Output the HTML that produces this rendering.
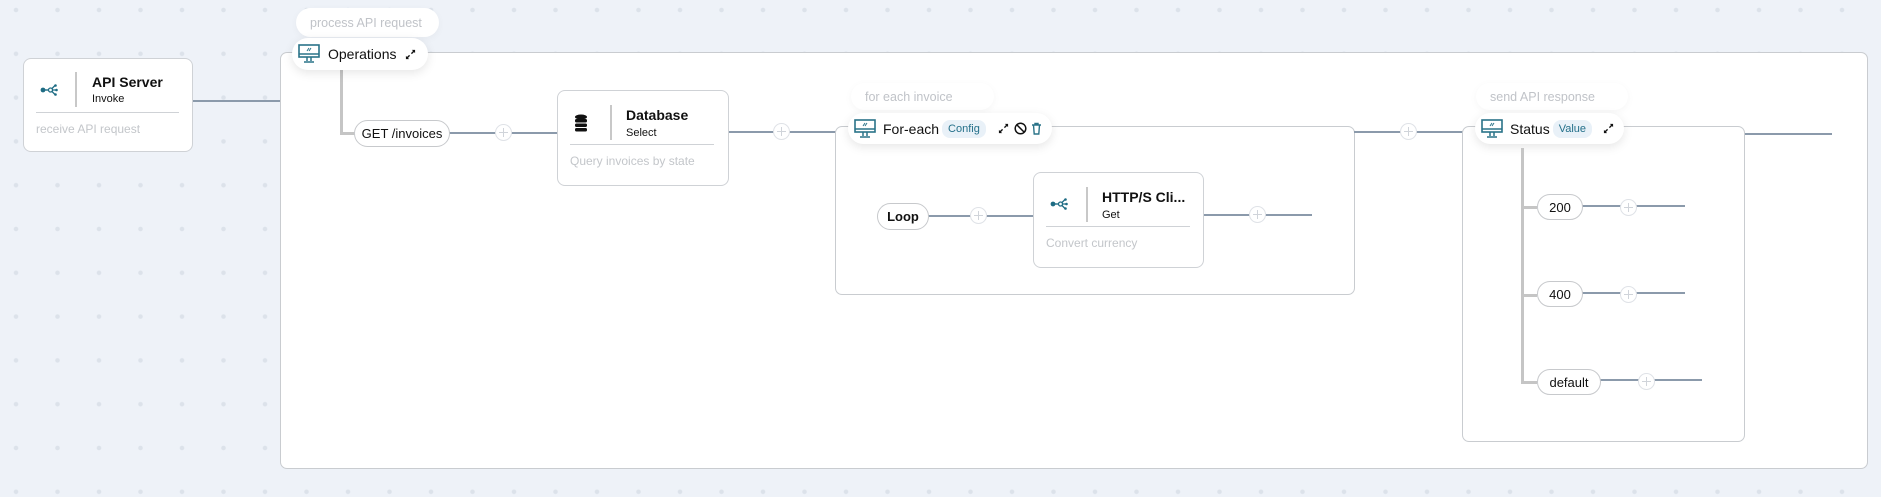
<!DOCTYPE html>
<html><head><meta charset="utf-8"><style>
*{box-sizing:border-box;margin:0;padding:0}
body{width:1881px;height:497px;overflow:hidden;position:relative;font-family:"Liberation Sans",sans-serif;
background-color:#eef2f8;background-image:radial-gradient(circle,#dce2ea 2px,transparent 2.5px);background-size:41.5px 43.8px;background-position:-4.75px -11.9px}
.a{position:absolute}
.box{position:absolute;background:#fff;border:1px solid #cfd2d6;border-radius:8px}
.cont{position:absolute;background:#fff;border:1px solid #c9ccd0;border-radius:7px}
.h{position:absolute;height:2px;background:#8b9aab}
.g{position:absolute;background:#c5c5c5}
.plus{position:absolute;width:17px;height:17px;border:1.5px solid #dfe2e7;border-radius:50%;background:#fff}
.plus:before{content:"";position:absolute;left:3px;right:3px;top:6.5px;height:1px;background:#d0d4da}
.plus:after{content:"";position:absolute;top:3px;bottom:3px;left:6.5px;width:1px;background:#d0d4da}
.pill{position:absolute;background:#fff;border:1px solid #c7c9cc;border-radius:14px;font-size:13px;color:#111;display:flex;align-items:center;justify-content:center;white-space:nowrap}
.note{position:absolute;background:#fff;border-radius:15px;color:#c0c3c8;font-size:12.5px;padding-left:14px;display:flex;align-items:center;box-shadow:0 2px 8px rgba(0,0,0,.04);white-space:nowrap}
.hdr{position:absolute;background:#fff;border-radius:16px;box-shadow:0 3px 10px rgba(0,0,0,.1);display:flex;align-items:center;font-size:14px;color:#111;white-space:nowrap}
.tag{background:#e9f1f8;color:#24708a;font-size:11px;border-radius:8px;padding:3px 6px;margin-left:3px}
.t{position:absolute;font-size:14px;font-weight:bold;color:#111;white-space:nowrap}
.s{position:absolute;font-size:11px;color:#111}
.d{position:absolute;font-size:12px;color:#c3c6ca;white-space:nowrap}
.hr{position:absolute;height:1px;background:#cfd2d6}
.vd{position:absolute;width:2px;background:#c8c8c8}
</style></head><body>
<svg width="0" height="0" style="position:absolute"><defs>
<symbol id="mon" viewBox="0 0 22 20"><rect x="1" y="1" width="20" height="12" fill="none" stroke="#2a7388" stroke-width="1.6"/><line x1="1" y1="10" x2="21" y2="10" stroke="#2a7388" stroke-width="1.4"/><path d="M9 7l2-3M11 7l2-3" stroke="#2a7388" stroke-width="1"/><path d="M9 13v4M13 13v4M6 18h10" stroke="#2a7388" stroke-width="1.5"/></symbol>
<symbol id="sh" viewBox="0 0 18 12"><circle cx="3" cy="6" r="2.4" fill="#1e6c84"/><line x1="3" y1="6" x2="9" y2="6" stroke="#1e6c84" stroke-width="1.4"/><circle cx="10.5" cy="6" r="2" fill="none" stroke="#1e6c84" stroke-width="1.3"/><path d="M12 4.5L15 1.5M12 7.5L15 10.5M12.5 6H16" stroke="#1e6c84" stroke-width="1.3"/><circle cx="15.5" cy="1.5" r="1.3" fill="#1e6c84"/><circle cx="15.5" cy="10.5" r="1.3" fill="#1e6c84"/><circle cx="16.5" cy="6" r="1.3" fill="#1e6c84"/></symbol>
<symbol id="ex" viewBox="0 0 12 12"><path d="M2 10L5 7M7 5L10 2" stroke="#111" stroke-width="1.5"/><path d="M1 11V7.5L4.5 11Z M11 1V4.5L7.5 1Z" fill="#111"/></symbol>
</defs></svg>

<!-- API server -->
<div class="h" style="left:192px;top:100px;width:90px"></div>
<div class="box" style="left:23px;top:58px;width:170px;height:94px"></div>
<svg class="a" style="left:40px;top:84px" width="18" height="12"><use href="#sh"/></svg>
<div class="vd" style="left:75px;top:72px;height:35px"></div>
<div class="t" style="left:92px;top:74px">API Server</div>
<div class="s" style="left:92px;top:93px">Invoke</div>
<div class="hr" style="left:36px;top:112px;width:143px"></div>
<div class="d" style="left:36px;top:122px">receive API request</div>

<!-- Operations container -->
<div class="cont" style="left:280px;top:52px;width:1588px;height:417px"></div>
<div class="g" style="left:340px;top:70px;width:3px;height:64px"></div>
<div class="g" style="left:340px;top:132px;width:16px;height:3px"></div>
<div class="h" style="left:449px;top:132px;width:110px"></div>
<div class="plus" style="left:495px;top:124px"></div>
<div class="pill" style="left:354px;top:120px;width:96px;height:27px">GET /invoices</div>

<!-- Database -->
<div class="h" style="left:728px;top:131px;width:110px"></div>
<div class="plus" style="left:773px;top:123px"></div>
<div class="box" style="left:557px;top:90px;width:172px;height:96px"></div>
<svg class="a" style="left:574px;top:114px" width="14" height="18" viewBox="0 0 14 18"><ellipse cx="7" cy="3" rx="6" ry="2.5" fill="#111"/><rect x="1" y="5" width="12" height="3.5" rx="1.5" fill="#111"/><rect x="1" y="9.5" width="12" height="3.5" rx="1.5" fill="#111"/><rect x="1" y="14" width="12" height="3.5" rx="1.5" fill="#111"/></svg>
<div class="vd" style="left:610px;top:105px;height:35px"></div>
<div class="t" style="left:626px;top:107px">Database</div>
<div class="s" style="left:626px;top:127px">Select</div>
<div class="hr" style="left:570px;top:144px;width:144px"></div>
<div class="d" style="left:570px;top:154px">Query invoices by state</div>

<!-- For-each container -->
<div class="cont" style="left:835px;top:126px;width:520px;height:169px"></div>
<div class="h" style="left:1354px;top:131px;width:110px"></div>
<div class="plus" style="left:1400px;top:123px"></div>
<div class="note" style="left:851px;top:83px;width:143px;height:27px">for each invoice</div>
<div class="hdr" style="left:848px;top:113px;width:204px;height:31px;padding-left:6px">
<svg width="22" height="20"><use href="#mon"/></svg><span style="margin-left:7px">For-each</span><span class="tag">Config</span>
<svg style="margin-left:12px" width="11" height="11"><use href="#ex"/></svg>
<svg style="margin-left:5px" width="13" height="13" viewBox="0 0 13 13"><circle cx="6.5" cy="6.5" r="5.3" fill="none" stroke="#111" stroke-width="1.5"/><line x1="3" y1="3" x2="10" y2="10" stroke="#111" stroke-width="1.5"/></svg>
<svg style="margin-left:4px" width="11" height="13" viewBox="0 0 11 13"><path d="M1 3h9M4 3V1.5h3V3M2.5 3l.7 9h4.6l.7-9" fill="none" stroke="#2a7388" stroke-width="1.4"/></svg>
</div>
<div class="h" style="left:928px;top:215px;width:106px"></div>
<div class="plus" style="left:970px;top:207px"></div>
<div class="pill" style="left:877px;top:203px;width:52px;height:27px;font-weight:bold">Loop</div>
<div class="h" style="left:1203px;top:214px;width:109px"></div>
<div class="plus" style="left:1249px;top:206px"></div>
<div class="box" style="left:1033px;top:172px;width:171px;height:96px"></div>
<svg class="a" style="left:1050px;top:198px" width="18" height="12"><use href="#sh"/></svg>
<div class="vd" style="left:1086px;top:187px;height:35px"></div>
<div class="t" style="left:1102px;top:189px">HTTP/S Cli...</div>
<div class="s" style="left:1102px;top:209px">Get</div>
<div class="hr" style="left:1046px;top:226px;width:144px"></div>
<div class="d" style="left:1046px;top:236px">Convert currency</div>

<!-- Status container -->
<div class="cont" style="left:1462px;top:126px;width:283px;height:316px"></div>
<div class="h" style="left:1745px;top:133px;width:87px"></div>
<div class="note" style="left:1476px;top:83px;width:152px;height:27px">send API response</div>
<div class="hdr" style="left:1475px;top:113px;width:149px;height:31px;padding-left:6px">
<svg width="22" height="20"><use href="#mon"/></svg><span style="margin-left:7px">Status</span><span class="tag">Value</span>
<svg style="margin-left:11px" width="11" height="11"><use href="#ex"/></svg>
</div>
<div class="g" style="left:1521px;top:148px;width:3px;height:236px"></div>
<div class="g" style="left:1521px;top:206px;width:16px;height:3px"></div>
<div class="g" style="left:1521px;top:294px;width:16px;height:3px"></div>
<div class="g" style="left:1521px;top:381px;width:16px;height:3px"></div>
<div class="h" style="left:1582px;top:205px;width:103px"></div>
<div class="plus" style="left:1620px;top:199px"></div>
<div class="pill" style="left:1537px;top:194px;width:46px;height:26px">200</div>
<div class="h" style="left:1582px;top:292px;width:103px"></div>
<div class="plus" style="left:1620px;top:286px"></div>
<div class="pill" style="left:1537px;top:281px;width:46px;height:26px">400</div>
<div class="h" style="left:1600px;top:379px;width:102px"></div>
<div class="plus" style="left:1638px;top:373px"></div>
<div class="pill" style="left:1537px;top:369px;width:64px;height:26px">default</div>

<!-- Operations header -->
<div class="note" style="left:296px;top:8px;width:143px;height:29px">process API request</div>
<div class="hdr" style="left:292px;top:38px;width:136px;height:32px;padding-left:6px">
<svg width="22" height="20"><use href="#mon"/></svg><span style="margin-left:8px">Operations</span>
<svg style="margin-left:9px" width="11" height="11"><use href="#ex"/></svg>
</div>
</body></html>
